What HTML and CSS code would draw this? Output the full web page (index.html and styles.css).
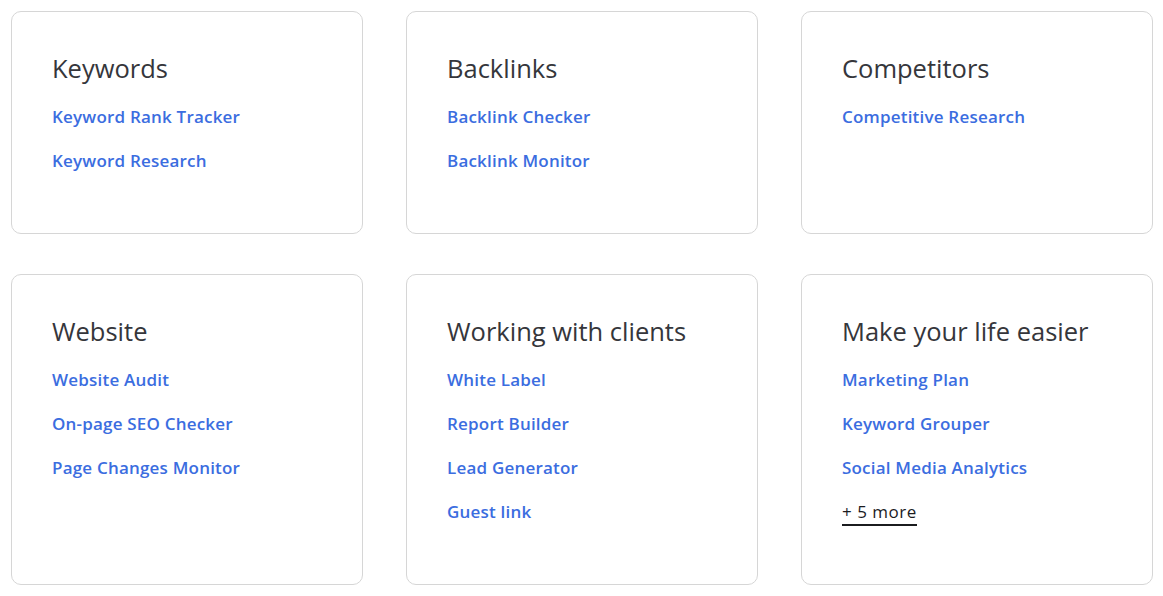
FILE: index.html
```html
<!DOCTYPE html>
<html lang="en">
<head>
    <meta charset="UTF-8">
    <meta name="viewport" content="width=device-width, initial-scale=1.0">
    <title>Tools</title>
    <link rel="stylesheet" href="styles.css">
</head>
<body>

    <div class="tools-grid">
        <div class="tool-card">
            <h2>Keywords</h2>
            <ul class="tool-links">
                <li><a href="#">Keyword Rank Tracker</a></li>
                <li><a href="#">Keyword Research</a></li>
            </ul>
        </div>

        <div class="tool-card">
            <h2>Backlinks</h2>
            <ul class="tool-links">
                <li><a href="#">Backlink Checker</a></li>
                <li><a href="#">Backlink Monitor</a></li>
            </ul>
        </div>

        <div class="tool-card">
            <h2>Competitors</h2>
            <ul class="tool-links">
                <li><a href="#">Competitive Research</a></li>
            </ul>
        </div>

        <div class="tool-card">
            <h2>Website</h2>
            <ul class="tool-links">
                <li><a href="#">Website Audit</a></li>
                <li><a href="#">On-page SEO Checker</a></li>
                <li><a href="#">Page Changes Monitor</a></li>
            </ul>
        </div>

        <div class="tool-card">
            <h2>Working with clients</h2>
            <ul class="tool-links">
                <li><a href="#">White Label</a></li>
                <li><a href="#">Report Builder</a></li>
                <li><a href="#">Lead Generator</a></li>
                <li><a href="#">Guest link</a></li>
            </ul>
        </div>

        <div class="tool-card">
            <h2>Make your life easier</h2>
            <ul class="tool-links">
                <li><a href="#">Marketing Plan</a></li>
                <li><a href="#">Keyword Grouper</a></li>
                <li><a href="#">Social Media Analytics</a></li>
                <li><a href="#" class="more-link">+ 5 more</a></li>
            </ul>
        </div>
    </div>

</body>
</html>
```

FILE: styles.css
```css
body {
    margin: 0;
    font-family: "Open Sans", Lato, sans-serif;
    background-color: #fff;
    color: #35363b;
}
.tools-grid {
    display: grid;
    grid-template-columns: repeat(3, 1fr);
    gap: 40px 43px;
    padding: 11px 10px 0 11px;
}
.tool-card {
    border: 1px solid #d6d6d6;
    border-radius: 10px;
    padding: 40px 40px 60px;
}
.tool-card h2 {
    margin: 0 0 21px;
    font-size: 25.5px;
    line-height: 32px;
    font-weight: 400;
    color: #35363b;
}
.tool-links {
    list-style: none;
    margin: 0;
    padding: 0;
    display: flex;
    flex-direction: column;
    gap: 20px;
}
.tool-links li {
    line-height: 24px;
    font-size: 17px;
    letter-spacing: 0.2px;
}
.tool-links a {
    color: #3b6de0;
    text-decoration: none;
    font-weight: 600;
}
.tool-links a.more-link {
    color: #1b1c1f;
    font-weight: 400;
    letter-spacing: 0.5px;
    border-bottom: 2px solid #1b1c1f;
    padding-bottom: 1px;
}
```
